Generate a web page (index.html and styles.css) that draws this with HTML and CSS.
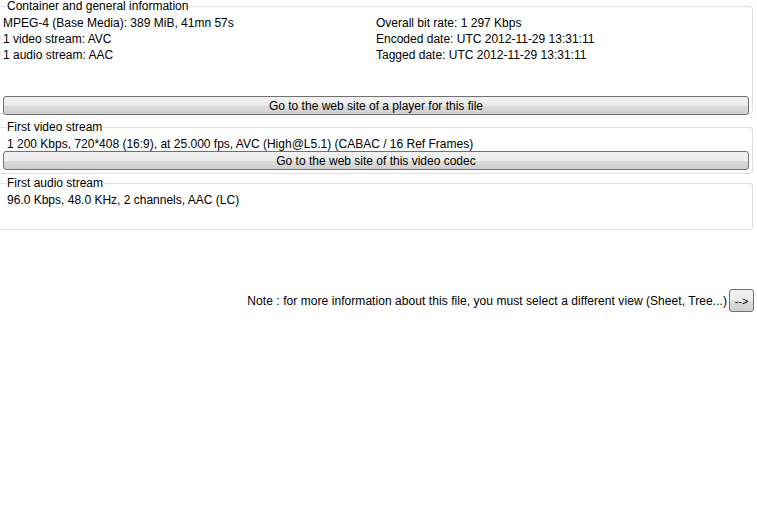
FILE: index.html
```html
<!DOCTYPE html>
<html lang="en">
<head>
    <meta charset="UTF-8">
    <title>MediaInfo - Easy view</title>
    <link rel="stylesheet" href="styles.css">
</head>
<body>
    <fieldset class="group general">
        <legend>Container and general information</legend>
        <div class="columns">
            <div class="col">
                <div>MPEG-4 (Base Media): 389 MiB, 41mn 57s</div>
                <div>1 video stream: AVC</div>
                <div>1 audio stream: AAC</div>
            </div>
            <div class="col">
                <div>Overall bit rate: 1 297 Kbps</div>
                <div>Encoded date: UTC 2012-11-29 13:31:11</div>
                <div>Tagged date: UTC 2012-11-29 13:31:11</div>
            </div>
        </div>
        <button class="wide">Go to the web site of a player for this file</button>
    </fieldset>

    <fieldset class="group video">
        <legend>First video stream</legend>
        <div class="line">1 200 Kbps, 720*408 (16:9), at 25.000 fps, AVC (High@L5.1) (CABAC / 16 Ref Frames)</div>
        <button class="wide">Go to the web site of this video codec</button>
    </fieldset>

    <fieldset class="group audio">
        <legend>First audio stream</legend>
        <div class="line">96.0 Kbps, 48.0 KHz, 2 channels, AAC (LC)</div>
    </fieldset>

    <div class="note">
        <span>Note : for more information about this file, you must select a different view (Sheet, Tree...)</span>
        <button class="next">--&gt;</button>
    </div>
</body>
</html>
```

FILE: styles.css
```css
body {
    margin: 0;
    background: #fff;
    color: #000;
    font-family: "Liberation Sans", Arial, sans-serif;
    font-size: 12px;
    line-height: 16px;
}

.group {
    margin: 0 4px 0 -3px;
    padding: 0 4px 0 5px;
    border: 1px solid #d5dfe5;
    border-radius: 3px;
    min-inline-size: 0;
}

.group legend {
    padding: 0 1px;
    margin-left: 3px;
    line-height: 12px;
}

.general {
    height: 112px;
}

.video {
    margin-top: 7px;
    height: 51px;
}

.audio {
    margin-top: 3px;
    height: 51px;
}

.columns {
    display: grid;
    grid-template-columns: 373px 1fr;
    padding-top: 3px;
}

.line {
    padding-top: 3px;
    padding-left: 4px;
}

.wide {
    display: block;
    width: 746px;
    height: 19px;
    padding: 0;
    margin-top: 0;
    font: inherit;
    color: #000;
    border: 1px solid #707070;
    border-radius: 3px;
    background: linear-gradient(#f2f2f2 0%, #ebebeb 50%, #dddddd 51%, #cfcfcf 100%);
}

.general .wide {
    margin-top: 33px;
}

.video .wide {
    margin-top: -1px;
}

.note {
    display: flex;
    justify-content: flex-end;
    align-items: center;
    gap: 2px;
    margin-top: 59px;
    margin-right: 3px;
    letter-spacing: 0.06px;
}

.next {
    width: 25px;
    height: 23px;
    padding: 0;
    font: inherit;
    font-size: 11px;
    letter-spacing: 0;
    color: #000;
    border: 1px solid #707070;
    border-radius: 3px;
    background: linear-gradient(#f2f2f2 0%, #ebebeb 50%, #dddddd 51%, #cfcfcf 100%);
}
```
